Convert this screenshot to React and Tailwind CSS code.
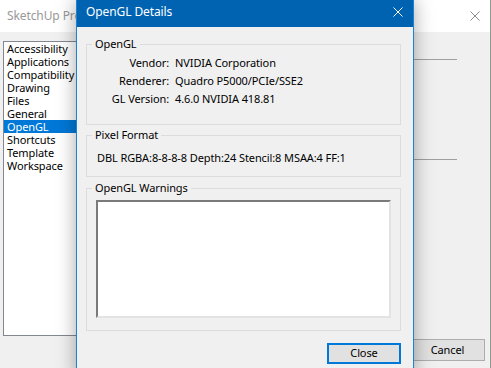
import React from 'react';

const items = [
  'Accessibility',
  'Applications',
  'Compatibility',
  'Drawing',
  'Files',
  'General',
  'OpenGL',
  'Shortcuts',
  'Template',
  'Workspace',
];

const details = [
  ['Vendor:', 'NVIDIA Corporation'],
  ['Renderer:', 'Quadro P5000/PCIe/SSE2'],
  ['GL Version:', '4.6.0 NVIDIA 418.81'],
];

function CloseGlyph({ color }) {
  return (
    <svg width="10" height="10" viewBox="0 0 10 10">
      <path d="M0.5 0.5 L9.5 9.5 M9.5 0.5 L0.5 9.5" stroke={color} strokeWidth="1" fill="none" />
    </svg>
  );
}

export default function App() {
  return (
    <div className="relative w-[491px] h-[368px] overflow-hidden bg-[#f0f0f0] text-[11px] tracking-[-0.1px] text-black font-['Segoe_UI','Noto_Sans',sans-serif]">
      {/* background window: SketchUp Preferences */}
      <div className="flex h-full flex-col border-r border-[#8c9c8c]">
        <div className="flex h-[32px] items-center justify-between bg-white pl-[7px] pr-[10px]">
          <span className="text-[12px] text-[#999999]">SketchUp Pre</span>
          <CloseGlyph color="#8a8a8a" />
        </div>
        <div className="flex flex-1">
          <div className="ml-[3px] mt-[9px] h-[295px] w-[120px] border border-[#828790] bg-white">
            {items.map((item) => (
              <div
                key={item}
                className={`h-[13px] pl-[3px] leading-[13px] ${
                  item === 'OpenGL' ? 'bg-[#0078d7] text-white' : ''
                }`}
              >
                {item}
              </div>
            ))}
          </div>
          <div className="flex flex-1 flex-col items-end">
            <div className="mr-[33px] mt-[27px] h-px w-[200px] bg-[#a0a0a0]" />
            <div className="mr-[33px] mt-[99px] h-px w-[200px] bg-[#a0a0a0]" />
            <button className="mb-[7px] mr-[5px] mt-auto h-[22px] w-[75px] border border-[#adadad] bg-[#e1e1e1]">
              Cancel
            </button>
          </div>
        </div>
      </div>

      {/* OpenGL Details dialog */}
      <div className="absolute left-[76px] top-0 flex h-[380px] w-[338px] flex-col border-x border-b border-[#1883d7] bg-[#f0f0f0] shadow-[0_0_18px_rgba(0,0,0,0.35)]">
        <div className="flex h-[27px] items-center justify-between bg-[#0063b1] pb-[3px] pl-[9px] pr-[10px] text-[12px] text-white">
          <span>OpenGL Details</span>
          <CloseGlyph color="#ffffff" />
        </div>

        <div className="flex flex-col pl-[9px] pr-[12px] pt-[9px]">
          <fieldset className="border border-[#dcdcdc] pb-[16px] pt-[2px]">
            <legend className="ml-[5px] px-[3px] leading-[16px]">OpenGL</legend>
            <div className="grid grid-cols-[82px_1fr] gap-x-[6px] leading-[18px]">
              {details.map(([label, value]) => (
                <React.Fragment key={label}>
                  <span className="text-right">{label}</span>
                  <span>{value}</span>
                </React.Fragment>
              ))}
            </div>
          </fieldset>

          <fieldset className="mt-[2px] border border-[#dcdcdc] pb-[10px] pl-[10px] pt-[7px]">
            <legend className="ml-[-5px] px-[3px] leading-[16px]">Pixel Format</legend>
            <div className="leading-[16px]">DBL RGBA:8-8-8-8 Depth:24 Stencil:8 MSAA:4 FF:1</div>
          </fieldset>

          <fieldset className="mt-[3px] border border-[#dcdcdc] pb-[12px] pl-[9px] pt-[4px]">
            <legend className="ml-[-4px] px-[3px] leading-[16px]">OpenGL Warnings</legend>
            <div className="h-[118px] w-[295px] border-2 border-b-[#e3e3e3] border-l-[#7a7a7a] border-r-[#e3e3e3] border-t-[#7a7a7a] bg-white" />
          </fieldset>

          <div className="mt-[12px] flex justify-end">
            <button className="h-[21px] w-[74px] border-2 border-[#0078d7] bg-[#e1e1e1]">Close</button>
          </div>
        </div>
      </div>
    </div>
  );
}
